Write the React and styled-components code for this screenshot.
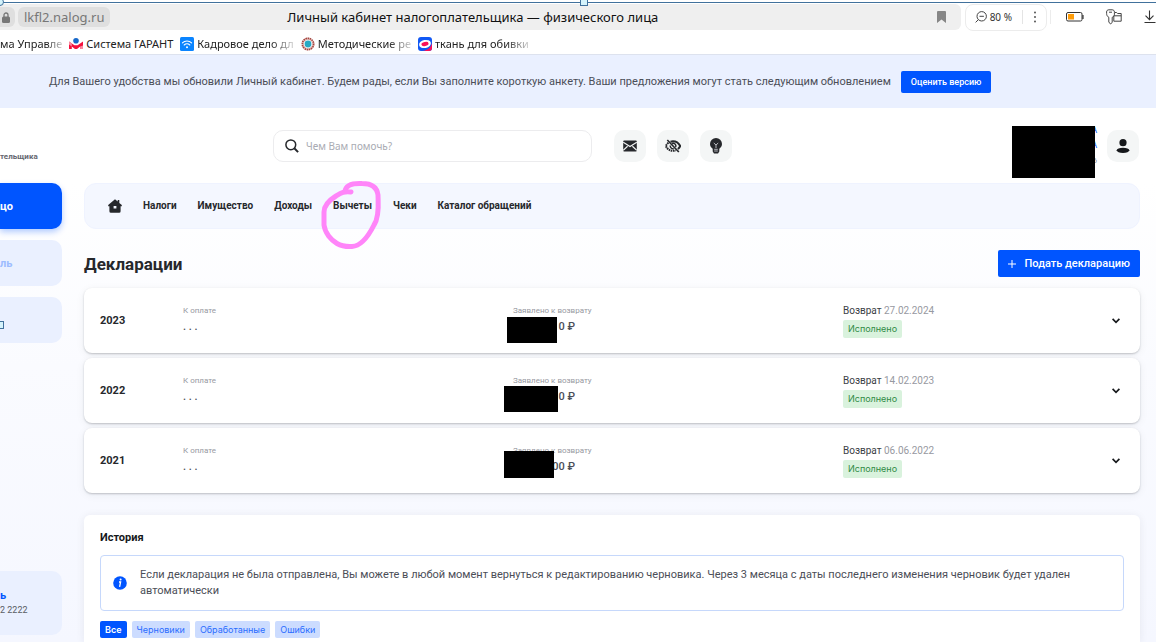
import React, { useState } from 'react'
import styled, { createGlobalStyle, css } from 'styled-components'

const declarations = [
  { year: '2023', amount: '0 ₽', date: '27.02.2024', mask: { left: -6, top: 29, width: 50, height: 26 } },
  { year: '2022', amount: '0 ₽', date: '14.02.2023', mask: { left: -9, top: 28, width: 54, height: 26 } },
  { year: '2021', amount: '00 ₽', date: '06.06.2022', mask: { left: -9, top: 23, width: 50, height: 27 } },
]

const filters = ['Все', 'Черновики', 'Обработанные', 'Ошибки']

function GarantIcon() {
  return (
    <svg width='14' height='14' viewBox='0 0 14 14'>
      <path d='M0 4.500v7.500h2.800V9.500L6 12h2l3.200-2.500V12H14V4.500L8.600 8.200H5.400z' fill='#f5103c' />
      <path d='M0 4.500v3l2.800 2v-3zM14 8.500V12h-2.800V9.500z' fill='#fb8ba0' />
      <circle cx='7' cy='3.800' r='2.800' fill='#1768c9' />
    </svg>
  )
}

function WifiIcon() {
  return (
    <svg width='14' height='14' viewBox='0 0 14 14'>
      <rect width='14' height='14' rx='1.5' fill='#0a84ff' />
      <g fill='none' stroke='#fff' strokeWidth='1.1' strokeLinecap='round'>
        <path d='M2.4 5.8a6.6 6.6 0 0 1 9.2 0' />
        <path d='M4.2 8a4 4 0 0 1 5.6 0' />
      </g>
      <circle cx='7' cy='10.2' r='1' fill='#fff' />
    </svg>
  )
}

function SealIcon() {
  return (
    <svg width='14' height='14' viewBox='0 0 14 14'>
      <circle cx='7' cy='7' r='5.6' fill='#fff' stroke='#a5453f' strokeWidth='1.8' strokeDasharray='1.6 .5' />
      <circle cx='7' cy='7' r='4.6' fill='none' stroke='#c98a85' strokeWidth='.5' />
      <circle cx='7' cy='7' r='3.4' fill='#27a9c4' />
    </svg>
  )
}

function MarketIcon() {
  return (
    <svg width='14' height='14' viewBox='0 0 14 14'>
      <rect width='14' height='14' rx='3' fill='#1158f5' />
      <path d='M14 6v5a3 3 0 0 1-3 3H4.500c4-.4 8.500-3 9.500-8z' fill='#fb1158' />
      <ellipse cx='7' cy='7' rx='6' ry='4' transform='rotate(-12 7 7)' fill='#fff' />
      <ellipse cx='7' cy='7' rx='3.600' ry='2' transform='rotate(-12 7 7)' fill='#fb1158' />
    </svg>
  )
}

const bookmarks = [
  { text: 'ма Управле', fade: true },
  { text: 'Система ГАРАНТ', icon: <GarantIcon /> },
  { text: 'Кадровое дело дл', icon: <WifiIcon />, fade: true },
  { text: 'Методические ре', icon: <SealIcon />, fade: true },
  { text: 'ткань для обивки', icon: <MarketIcon />, fade: true },
]

function App() {
  const [filter, setFilter] = useState('Все')

  return (
    <>
      <GlobalStyle />
      <Page>
        <SelectionLine>
          <Handle $left='0' $round />
          <Handle $left='50%' />
        </SelectionLine>

        <Toolbar>
          <AddressBar>
            <UrlGroup>
              <LockChip>
                <svg width='8' height='11' viewBox='0 0 8 11'>
                  <path d='M2 5V3a2 2 0 0 1 4 0v2' fill='none' stroke='#777' strokeWidth='1.3' />
                  <rect y='4.500' width='8' height='6.500' rx='1.500' fill='#777' />
                </svg>
              </LockChip>
              <UrlChip>lkfl2.nalog.ru</UrlChip>
            </UrlGroup>
            <PageTitle>Личный кабинет налогоплательщика — физического лица</PageTitle>
            <ChromeButton aria-label='Добавить в закладки' $end>
              <svg width='9' height='12' viewBox='0 0 9 12'>
                <path d='M0 1a1 1 0 0 1 1-1h7a1 1 0 0 1 1 1v11L4.500 8.500 0 12z' fill='#868686' />
              </svg>
            </ChromeButton>
          </AddressBar>
          <ZoomBox>
            <ZoomButton>
              <svg width='12' height='12' viewBox='0 0 12 12' fill='none' stroke='#444' strokeWidth='1'>
                <circle cx='6.700' cy='5.300' r='4.700' />
                <path d='M3.300 8.700.6 11.400M4.500 5.300h4.400' />
              </svg>
              80 %
            </ZoomButton>
            <Divider />
            <ChromeButton aria-label='Меню'>
              <svg width='4' height='12' viewBox='0 0 4 12' fill='#444'>
                <circle cx='2' cy='1.500' r='.9' />
                <circle cx='2' cy='6' r='.9' />
                <circle cx='2' cy='10.500' r='.9' />
              </svg>
            </ChromeButton>
          </ZoomBox>
          <ChromeTools>
            <ChromeButton aria-label='Батарея'>
              <svg width='18' height='10' viewBox='0 0 18 10'>
                <rect x='.5' y='.5' width='15.500' height='8.500' rx='1.500' fill='#fff' stroke='#333' />
                <rect x='2' y='2' width='6' height='5.500' fill='#ff9d0a' />
                <path d='M16.500 3h1v4h-1z' fill='#111' />
              </svg>
            </ChromeButton>
            <ChromeButton aria-label='Пароли'>
              <svg width='16' height='16' viewBox='0 0 16 16' fill='none' stroke='#444' strokeWidth='1' strokeLinejoin='round'>
                <path d='M2.800 8.300C1.400 7.600.6 6.300.6 4.400V3C.6 1.600 1.500.8 2.800.8h3.400c1.300 0 2.200.8 2.200 2.200M2.800 8.300V13l1.700 2 1.700-1.500v-5.200c1.300-.6 2-1.300 2.200-2.500' />
                <path d='M3 3.200h3' />
                <path d='M8.400 5.800V3.500h2.200l1 1h3.600v7.700H7.800V6.800h7.400' />
              </svg>
            </ChromeButton>
            <ChromeButton aria-label='Загрузки'>
              <svg width='12' height='14' viewBox='0 0 12 14' fill='none' stroke='#333' strokeWidth='1.100'>
                <path d='M5.500.5v9M1.500 5.700l4 4 4-4M.5 12.500h11' />
              </svg>
            </ChromeButton>
          </ChromeTools>
        </Toolbar>

        <Bookmarks>
          {bookmarks.map((b) => (
            <Bookmark href='#' key={b.text}>
              {b.icon}
              <BookmarkText $fade={b.fade}>{b.text}</BookmarkText>
            </Bookmark>
          ))}
        </Bookmarks>

        <Banner>
          <p>
            Для Вашего удобства мы обновили Личный кабинет. Будем рады, если Вы заполните короткую анкету. Ваши предложения могут стать следующим обновлением
          </p>
          <PrimaryButton $small>Оценить версию</PrimaryButton>
        </Banner>

        <Header>
          <LogoText>тельщика</LogoText>
          <SearchBox>
            <svg width='14' height='14' viewBox='0 0 14 14' fill='none' stroke='#26282c' strokeWidth='1.500'>
              <circle cx='5.800' cy='5.800' r='4.900' />
              <path d='m9.300 9.300 3.800 3.800' strokeWidth='2' />
            </svg>
            <input aria-label='Поиск' placeholder='Чем Вам помочь?' />
          </SearchBox>
          <HeaderButtons>
            <SquareButton aria-label='Сообщения'>
              <svg width='14' height='12' viewBox='0 0 14 12'>
                <rect x='.2' y='.5' width='13.600' height='11' rx='1' fill='#26282c' />
                <path d='M.2 2.200 7 6.600l6.800-4.400M.2 10.300l4.400-4M13.800 10.300l-4.400-4' fill='none' stroke='#f4f6f6' strokeWidth='1.200' />
              </svg>
            </SquareButton>
            <SquareButton aria-label='Версия для слабовидящих'>
              <svg width='16' height='14' viewBox='0 0 16 14' fill='none' stroke='#26282c'>
                <path d='M5.500 2.700A8 8 0 0 1 8 2.200c3.500 0 6 2.400 7.200 4.800-.6 1.200-1.400 2.200-2.300 3' strokeWidth='2' />
                <path d='M3.500 3.800C2.300 4.700 1.400 5.800.8 7c1.200 2.500 3.700 4.800 7.200 4.800 1 0 1.900-.2 2.700-.5' strokeWidth='2' strokeDasharray='1.600 .6' />
                <path d='M7 4.500a2.800 2.800 0 0 1 3.700 3.600M5.300 6.500a2.800 2.800 0 0 0 3.500 3.200' strokeWidth='1.500' />
                <path d='m2.300 1 11.500 12' strokeWidth='1.700' />
              </svg>
            </SquareButton>
            <SquareButton aria-label='Подсказки'>
              <svg width='14' height='16' viewBox='0 0 14 16'>
                <path d='M7 0a6 6 0 0 0-6 6c0 2.200 1.200 3.600 2.700 4.800v2.700L5 15.500h4l1.300-2v-2.700C11.800 9.600 13 8.200 13 6a6 6 0 0 0-6-6z' fill='#26282c' />
                <path d='m4.800 5 2.200 2 2.200-2M7 7v3' fill='none' stroke='#c9cbd0' strokeWidth='.9' />
                <path d='M5.200 11.300h3.600M5.200 13h3.600' stroke='#c9cbd0' strokeWidth='.9' />
              </svg>
            </SquareButton>
          </HeaderButtons>
          <Account>
            <span>А</span>
            <span>А</span>
            <small>6</small>
            <AccountMask />
          </Account>
          <SquareButton aria-label='Профиль'>
            <svg width='14' height='14' viewBox='0 0 14 14' fill='#16181b'>
              <circle cx='7' cy='3.700' r='3.600' />
              <ellipse cx='7' cy='11.300' rx='6.300' ry='2.600' />
            </svg>
          </SquareButton>
        </Header>

        <Body>
          <Sidebar>
            <SideItem href='#' $active>цо</SideItem>
            <SideItem href='#'>ль</SideItem>
            <SideItem href='#'>
              <SideSquare />
            </SideItem>
            <Contacts>
              <b>ь</b>
              <span>2 2222</span>
            </Contacts>
          </Sidebar>

          <Content>
            <Nav>
              <NavLink href='#' aria-label='Главная'>
                <svg width='14' height='14' viewBox='0 0 14 14' fill='#26282c'>
                  <path fillRule='evenodd' d='M7 .3 9.700 2.500V1h1.600v2.900L13.800 6v1.300h-1.200v4.900a1.500 1.500 0 0 1-1.500 1.500H2.900a1.500 1.500 0 0 1-1.500-1.500V7.300H.2V6zM5.600 7v2.600h2.800V7z' />
                </svg>
              </NavLink>
              <NavLink href='#'>Налоги</NavLink>
              <NavLink href='#'>Имущество</NavLink>
              <NavLink href='#'>Доходы</NavLink>
              <NavLink href='#'>
                Вычеты
                <Marker width='66' height='72' viewBox='0 0 66 72'>
                  <path d='M32 14C25 13 22 15 17 18 9 23 5 28 5 34V47C6 55 12 62 18 65.500Q24 69 33 68.500C42 68 50 57 55 47 61 38 59 23 59 17 58 9 52 5.500 43 5.500 33 5 27 7 26 13' />
                </Marker>
              </NavLink>
              <NavLink href='#'>Чеки</NavLink>
              <NavLink href='#'>Каталог обращений</NavLink>
            </Nav>

            <TitleRow>
              <h1>Декларации</h1>
              <PrimaryButton>
                <svg width='8' height='8' viewBox='0 0 8 8' stroke='#fff' strokeWidth='1'>
                  <path d='M4 0v8M0 4h8' />
                </svg>
                Подать декларацию
              </PrimaryButton>
            </TitleRow>

            <CardList>
              {declarations.map((d) => (
                <Card key={d.year}>
                  <Year>{d.year}</Year>
                  <Cell>
                    <Label>К оплате</Label>
                    <Value>. . .</Value>
                  </Cell>
                  <Cell>
                    <Label>Заявлено к возврату</Label>
                    <Value $right>{d.amount}</Value>
                    <Mask $box={d.mask} />
                  </Cell>
                  <Status>
                    <div>
                      <p>Возврат <time>{d.date}</time></p>
                      <Badge>Исполнено</Badge>
                    </div>
                    <Expand aria-label={`Развернуть ${d.year}`}>
                      <svg width='8' height='6' viewBox='0 0 8 6' fill='none' stroke='#16181b' strokeWidth='1.700'>
                        <path d='m.6.900 3.400 3.400L7.400.9' />
                      </svg>
                    </Expand>
                  </Status>
                </Card>
              ))}
            </CardList>

            <History>
              <h2>История</h2>
              <Notice>
                <svg width='14' height='14' viewBox='0 0 14 14'>
                  <circle cx='7' cy='7' r='6.800' fill='#0055ff' />
                  <circle cx='7.600' cy='3.600' r='1' fill='#fff' />
                  <path d='M6 6h1.600l-1 4.800' fill='none' stroke='#fff' strokeWidth='1.300' />
                </svg>
                <p>
                  Если декларация не была отправлена, Вы можете в любой момент вернуться к редактированию черновика. Через 3 месяца с даты последнего изменения черновик будет удален автоматически
                </p>
              </Notice>
              <Filters>
                {filters.map((f) => (
                  <Chip key={f} $active={f === filter} onClick={() => setFilter(f)}>{f}</Chip>
                ))}
              </Filters>
            </History>
          </Content>
        </Body>
      </Page>
    </>
  )
}

export default App

const GlobalStyle = createGlobalStyle`
  *{
    box-sizing:border-box;
  }
  body{
    margin:0;
    font-family:Roboto, sans-serif;
    color:#26282c;
    background:white;
  }
  h1, h2, p{
    margin:0;
  }
  a{
    color:inherit;
    text-decoration:none;
  }
  button{
    border:none;
    padding:0;
    font-family:inherit;
    cursor:pointer;
  }
  svg{
    flex:none;
    display:block;
  }
`

const Page = styled.div`
  min-height:100vh;
  display:flex;
  flex-direction:column;
  overflow:hidden;
`

const SelectionLine = styled.div`
  position:relative;
  height:3px;
  border-bottom:1px solid #41719c;
`

const Handle = styled.i`
  position:absolute;
  top:-2px;
  left:${(p) => p.$left};
  width:8px;
  height:8px;
  margin-left:${(p) => (p.$round ? '-4px' : '2px')};
  border:1px solid #41719c;
  border-radius:${(p) => (p.$round ? '50%' : '0')};
  background:#d5f3fb;
`

const Toolbar = styled.div`
  display:flex;
  align-items:center;
  height:28px;
  font-family:"Noto Sans", sans-serif;
`

const AddressBar = styled.div`
  flex:1;
  display:grid;
  grid-template-columns:1fr auto 1fr;
  align-items:center;
  height:26px;
  padding-right:15px;
  background:#efefef;
  border-radius:0 6px 6px 0;
`

const UrlGroup = styled.div`
  display:flex;
  gap:3px;
`

const LockChip = styled.span`
  display:flex;
  align-items:center;
  justify-content:center;
  width:15px;
  padding-right:4px;
  background:#dfdfdf;
  border-radius:0 6px 6px 0;
`

const UrlChip = styled.span`
  height:20px;
  padding:0 6px;
  line-height:20px;
  font-size:13px;
  color:#777;
  background:#dfdfdf;
  border-radius:6px;
`

const PageTitle = styled.span`
  font-size:13px;
  color:#111;
`

const ChromeButton = styled.button`
  display:flex;
  background:none;
  justify-self:${(p) => (p.$end ? 'end' : 'auto')};
`

const ZoomBox = styled.div`
  display:flex;
  align-items:center;
  gap:10px;
  height:27px;
  margin-left:4px;
  padding:0 9px;
  border:1px solid #ececec;
  border-radius:8px;
`

const ZoomButton = styled.button`
  display:flex;
  align-items:center;
  gap:3px;
  font-size:10px;
  color:#333;
  background:none;
`

const Divider = styled.i`
  width:1px;
  height:14px;
  background:#e4e4e4;
`

const ChromeTools = styled.div`
  display:flex;
  align-items:center;
  gap:22px;
  height:14px;
  margin-left:3px;
  padding-left:15px;
  border-left:1px solid #ececec;
`

const Bookmarks = styled.nav`
  display:flex;
  align-items:center;
  gap:7px;
  height:23px;
  padding-top:2px;
  font-family:"Noto Sans", sans-serif;
  font-size:11px;
  color:#222;
`

const Bookmark = styled.a`
  display:flex;
  align-items:center;
  gap:3px;
`

const BookmarkText = styled.span`
  white-space:nowrap;
  ${(p) => p.$fade && css`
    mask-image:linear-gradient(to right, black 75%, rgba(0, 0, 0, .2));
  `}
`

const Banner = styled.section`
  display:flex;
  align-items:center;
  gap:10px;
  height:54px;
  padding:0 49px;
  background:#eaf0ff;
  border-top:1px solid #dde2ee;

  p{
    font-size:11px;
    line-height:16px;
    color:#4b4e57;
  }
`

const PrimaryButton = styled.button`
  flex:none;
  display:flex;
  align-items:center;
  justify-content:center;
  gap:8px;
  height:${(p) => (p.$small ? '22px' : '27px')};
  padding:0 10px;
  font-size:${(p) => (p.$small ? '9px' : '11px')};
  font-weight:500;
  color:white;
  background:#0055ff;
  border-radius:2px;
`

const Header = styled.header`
  display:flex;
  align-items:center;
  height:75px;
  padding-right:17px;
`

const LogoText = styled.span`
  width:273px;
  padding-top:21px;
  font-size:8px;
  font-weight:700;
  color:#65676f;
`

const SearchBox = styled.label`
  flex:0 1 319px;
  display:flex;
  align-items:center;
  gap:7px;
  height:32px;
  padding:0 12px 0 11px;
  border:1px solid #ececee;
  border-radius:10px;

  input{
    flex:1;
    min-width:0;
    padding:0;
    border:none;
    outline:none;
    background:none;
    font-family:"Noto Sans", sans-serif;
    font-size:10px;
  }
  input::placeholder{
    color:#a9abb3;
  }
`

const HeaderButtons = styled.div`
  display:flex;
  gap:11px;
  margin-left:22px;
`

const SquareButton = styled.button`
  display:flex;
  align-items:center;
  justify-content:center;
  width:32px;
  height:32px;
  background:#f4f6f6;
  border-radius:10px;
`

const Account = styled.div`
  position:relative;
  display:flex;
  flex-direction:column;
  align-items:flex-end;
  gap:4px;
  margin-left:auto;
  margin-right:10px;
  font-size:9px;
  line-height:11px;
  color:#0055ff;

  small{
    font-size:8px;
    color:#8a8c94;
  }
`

const AccountMask = styled.i`
  position:absolute;
  right:2px;
  top:1px;
  width:83px;
  height:52px;
  background:black;
`

const Body = styled.div`
  flex:1;
  display:flex;
  gap:22px;
  padding-right:16px;
  background:linear-gradient(#ffffff, #fafbff 40%, #f5f7ff);
`

const Sidebar = styled.aside`
  flex:none;
  display:flex;
  flex-direction:column;
  gap:11px;
  width:62px;
  padding-bottom:7px;
`

const SideItem = styled.a`
  display:flex;
  align-items:center;
  height:46px;
  font-size:11px;
  font-weight:700;
  color:${(p) => (p.$active ? 'white' : '#9dbcff')};
  background:${(p) => (p.$active ? '#0055ff' : '#eaf0ff')};
  border-radius:0 10px 10px 0;
  box-shadow:${(p) => (p.$active ? '0 3px 6px rgba(0, 85, 255, .3)' : 'none')};
`

const SideSquare = styled.i`
  width:4px;
  height:8px;
  margin-top:10px;
  border:1px solid #41719c;
  border-left:none;
  background:#d5f3fb;
`

const Contacts = styled.div`
  display:flex;
  flex-direction:column;
  justify-content:center;
  height:64px;
  margin-top:auto;
  font-size:9px;
  line-height:14px;
  color:#5b5e66;
  background:#eaf0ff;
  border-radius:0 10px 10px 0;

  b{
    font-size:11px;
    color:#0055ff;
  }
`

const Content = styled.main`
  flex:1;
  min-width:0;
  display:flex;
  flex-direction:column;
`

const Nav = styled.nav`
  display:flex;
  align-items:center;
  gap:21px;
  height:46px;
  padding:0 23px;
  background:#f4f7ff;
  border:1px solid #eff3ff;
  border-radius:12px;
`

const NavLink = styled.a`
  position:relative;
  font-size:10px;
  line-height:14px;
  font-weight:700;
`

const Marker = styled.svg`
  position:absolute;
  left:-14px;
  top:-21px;
  fill:none;
  stroke:#ff85f9;
  stroke-width:5;
  stroke-linecap:round;
  pointer-events:none;
`

const TitleRow = styled.div`
  display:flex;
  align-items:center;
  justify-content:space-between;
  margin:21px 0 11px;

  h1{
    font-size:17px;
    line-height:20px;
    font-weight:700;
  }
`

const CardList = styled.div`
  display:flex;
  flex-direction:column;
  gap:5px;
`

const Card = styled.article`
  display:grid;
  grid-template-columns:83px 330fr 330fr 281fr;
  height:65px;
  padding:0 16px;
  background:white;
  border-radius:8px;
  box-shadow:0 1px 2px rgba(40, 44, 52, .25), 0 2px 10px rgba(40, 44, 52, .06);
`

const Year = styled.strong`
  align-self:center;
  font-size:11px;
  font-weight:700;
`

const Cell = styled.div`
  position:relative;
  padding-top:17px;
`

const Label = styled.p`
  font-size:8px;
  line-height:12px;
  color:#9799a1;
`

const Value = styled.p`
  width:62px;
  margin-top:2px;
  font-size:11px;
  line-height:16px;
  font-weight:500;
  color:#4b4e57;
  text-align:${(p) => (p.$right ? 'right' : 'left')};
`

const Mask = styled.i`
  position:absolute;
  left:${(p) => p.$box.left}px;
  top:${(p) => p.$box.top}px;
  width:${(p) => p.$box.width}px;
  height:${(p) => p.$box.height}px;
  background:black;
`

const Status = styled.div`
  display:flex;
  align-items:center;
  justify-content:space-between;
  font-size:10px;
  line-height:14px;
  color:#3b3e45;

  time{
    color:#9799a1;
  }
`

const Badge = styled.span`
  display:inline-block;
  height:18px;
  margin-top:2px;
  padding:0 5px;
  font-family:Inter, sans-serif;
  font-size:9px;
  line-height:18px;
  color:#2f8a45;
  background:#d9f2dd;
  border-radius:2px;
`

const Expand = styled.button`
  display:flex;
  padding:4px;
  background:none;
`

const History = styled.section`
  flex:1;
  margin-top:22px;
  padding:16px 16px 4px;
  background:white;
  border-radius:6px 6px 0 0;
  box-shadow:0 1px 8px rgba(40, 44, 52, .08);

  h2{
    font-size:11px;
    line-height:14px;
    font-weight:700;
    color:#16181b;
  }
`

const Notice = styled.div`
  display:flex;
  align-items:center;
  gap:13px;
  margin:10px 0;
  padding:11px 12px;
  border:1px solid #c6d8fb;
  border-radius:4px;

  p{
    font-size:11px;
    line-height:16px;
    color:#4b4e57;
  }
`

const Filters = styled.div`
  display:flex;
  gap:5px;
`

const Chip = styled.button`
  height:17px;
  padding:0 5px;
  font-family:Inter, sans-serif;
  font-size:9px;
  font-weight:${(p) => (p.$active ? 600 : 400)};
  color:${(p) => (p.$active ? 'white' : '#2a6cff')};
  background:${(p) => (p.$active ? '#0055ff' : '#ccdcff')};
  border-radius:2px;
`
